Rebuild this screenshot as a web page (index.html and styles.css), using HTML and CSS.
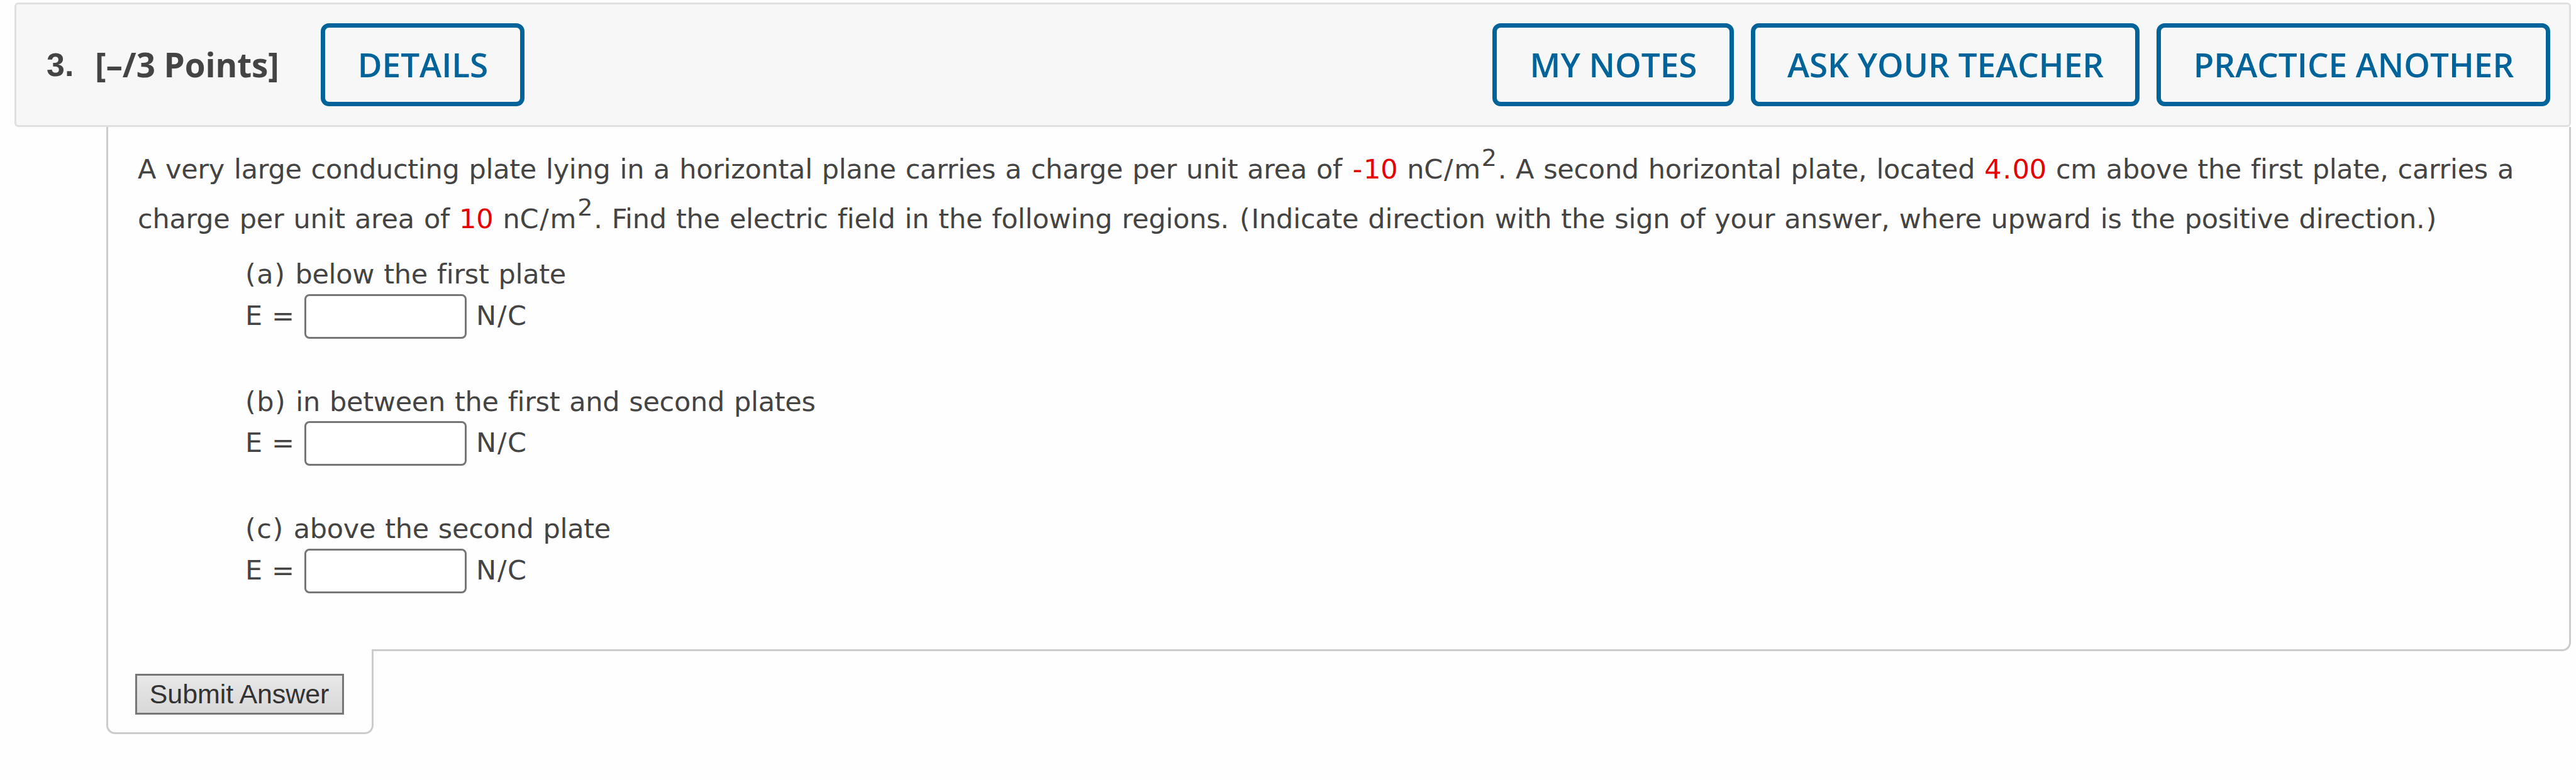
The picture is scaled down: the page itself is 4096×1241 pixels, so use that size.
FILE: index.html
```
<!DOCTYPE html>
<html lang="en">
<head>
    <meta charset="UTF-8">
    <meta name="viewport" content="width=device-width, initial-scale=1.0">
    <title>Question 3</title>
    <link rel="stylesheet" href="styles.css">
</head>
<body>
    <div class="question">
        <div class="header">
            <span class="number">3.</span>
            <span class="points">[–/3 Points]</span>
            <button class="btn details">DETAILS</button>
            <div class="actions">
                <button class="btn notes">MY NOTES</button>
                <button class="btn ask">ASK YOUR TEACHER</button>
                <button class="btn practice">PRACTICE ANOTHER</button>
            </div>
        </div>

        <div class="content">
            <div class="prompt">
                <div class="line">A very large conducting plate lying in a horizontal plane carries a charge per unit area of <span class="red"><span class="wide">-</span>10</span> nC<span class="wide">/</span>m<sup>2</sup>. A second horizontal plate, located <span class="red">4<span class="wide">.</span>00</span> cm above the first plate, carries a</div>
                <div class="line line-last">charge per unit area of <span class="red">10</span> nC<span class="wide">/</span>m<sup>2</sup>. Find the electric field in the following regions. <span class="wide">(</span>Indicate direction with the sign of your answer, where upward is the positive direction.<span class="wide">)</span></div>
            </div>

            <div class="parts">
                <div class="part">
                    <div class="label"><span class="letter">(a)</span> below the first plate</div>
                    <div class="answer"><span class="var">E =</span><input type="text"><span>N<span class="wide">/</span>C</span></div>
                </div>
                <div class="part">
                    <div class="label"><span class="letter">(b)</span> in between the first and second plates</div>
                    <div class="answer"><span class="var">E =</span><input type="text"><span>N<span class="wide">/</span>C</span></div>
                </div>
                <div class="part">
                    <div class="label"><span class="letter">(c)</span> above the second plate</div>
                    <div class="answer"><span class="var">E =</span><input type="text"><span>N<span class="wide">/</span>C</span></div>
                </div>
            </div>
        </div>

        <div class="tab">
            <button class="submit">Submit Answer</button>
        </div>
    </div>
</body>
</html>
```
FILE: styles.css
```
* {
    box-sizing: border-box;
}
body {
    margin: 0;
    background-color: #fefefe;
    color: #444;
    font-family: "DejaVu Sans", Verdana, sans-serif;
    font-size: 43px;
}
.question {
    padding: 4px 8px 0 23px;
}
.header {
    display: flex;
    align-items: center;
    height: 198px;
    padding: 0 30px 0 48px;
    border: 3px solid #e0e0e0;
    border-radius: 6px;
    background-color: #f7f7f7;
    font-family: "Open Sans", sans-serif;
    font-size: 53px;
    font-weight: 700;
    white-space: nowrap;
}
.number {
    width: 77px;
    font-family: "Liberation Sans", Arial, sans-serif;
    font-size: 52px;
}
.points {
    width: 359px;
    padding-bottom: 2px;
    letter-spacing: -0.1px;
}
.btn {
    height: 132px;
    padding: 0 0 2px 1px;
    border: 7px solid #006399;
    border-radius: 13px;
    background: none;
    color: #006399;
    font-family: inherit;
    font-size: 53px;
    font-weight: 600;
    white-space: nowrap;
}
.details {
    width: 324px;
}
.notes {
    width: 384px;
}
.ask {
    width: 618px;
}
.practice {
    width: 626px;
}
.actions {
    display: flex;
    gap: 27px;
    margin-left: auto;
}
.content {
    height: 834px;
    margin-left: 146px;
    padding: 28px 0 0 47px;
    border: 3px solid #ccc;
    border-top: none;
    border-radius: 0 0 14px 0;
    letter-spacing: -0.28px;
    word-spacing: 1.6px;
}
.line {
    height: 79px;
    line-height: 79px;
    white-space: nowrap;
}
.line-last {
    letter-spacing: -0.22px;
}
.red {
    color: #e60000;
}
.wide {
    padding: 0 2px;
}
sup {
    margin: 0 2px;
    font-size: 38px;
    line-height: 0;
    vertical-align: 20px;
}
.parts {
    padding: 20px 0 0 171px;
}
.part {
    height: 202.7px;
}
.label {
    height: 59.5px;
    line-height: 56px;
}
.letter {
    letter-spacing: 1.5px;
}
.answer {
    display: flex;
    height: 71px;
    line-height: 69px;
}
.var {
    width: 94px;
}
input {
    width: 258px;
    height: 71px;
    margin-right: 15px;
    border: 3px solid #767676;
    border-radius: 8px;
    background-color: #fff;
}
/* sits over the bottom border of the content so the two boxes read as one */
.tab {
    width: 425px;
    height: 135px;
    margin: -3px 0 0 146px;
    padding: 39px 0 0 43px;
    border: 3px solid #ccc;
    border-top: none;
    border-radius: 0 0 14px 14px;
    background-color: #fefefe;
}
.submit {
    width: 332px;
    height: 65px;
    padding: 0 1px 0 0;
    border: 3px solid #767676;
    background: linear-gradient(#e8e8e8, #d8d8d8);
    color: #333;
    font-family: "Liberation Sans", Arial, sans-serif;
    font-size: 43px;
    letter-spacing: -0.1px;
}
```
